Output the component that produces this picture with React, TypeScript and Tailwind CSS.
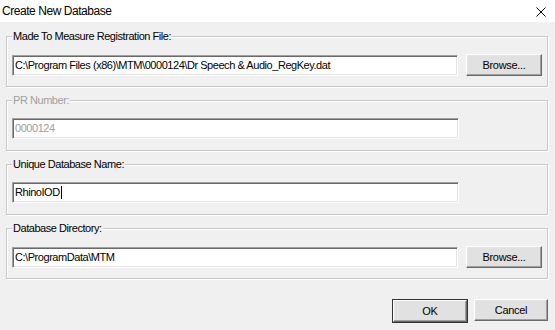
import React from "react";

const font = { fontFamily: '"Liberation Sans", Arial, sans-serif' };

function Group({ label, disabled, children }: { label: string; disabled?: boolean; children: React.ReactNode }) {
  return (
    <div className="relative h-[51px] border border-[#c9c9c9] shadow-[inset_1px_1px_0_#ffffff,1px_1px_0_#ffffff] pl-[5px] pr-[5px] pt-[17px]">
      <span
        className={`absolute left-[5px] top-[-8px] bg-[#f0f0f0] px-px text-[11px] leading-[14px] tracking-[-0.45px] ${disabled ? "text-[#a0a0a0]" : "text-black"}`}
      >
        {label}
      </span>
      {children}
    </div>
  );
}

function Field({ value, disabled, caret, width }: { value: string; disabled?: boolean; caret?: boolean; width: string }) {
  return (
    <div
      className={`${width} h-[21px] bg-white border border-t-[#a0a0a0] border-l-[#a0a0a0] border-b-white border-r-white shadow-[inset_1px_1px_0_#696969,inset_-1px_-1px_0_#e3e3e3] flex items-center pl-[2px] text-[11px] tracking-[-0.45px] whitespace-nowrap overflow-hidden ${disabled ? "text-[#a0a0a0]" : "text-black"}`}
    >
      <span>{value}</span>
      {caret && <span className="inline-block w-px h-[13px] bg-black ml-px" />}
    </div>
  );
}

function Btn({ children, w }: { children: React.ReactNode; w: string }) {
  return (
    <div
      className={`${w} h-[22px] bg-[#e1e1e1] border border-t-white border-l-white border-b-[#696969] border-r-[#696969] shadow-[inset_-1px_-1px_0_#a0a0a0,inset_1px_1px_0_#e3e3e3] flex items-center justify-center text-[11px] tracking-[-0.3px] text-black`}
    >
      {children}
    </div>
  );
}

export default function App() {
  return (
    <div className="w-[555px] h-[330px] bg-[#f0f0f0] flex flex-col overflow-hidden" style={font}>
      <div className="h-[22px] bg-white flex items-center justify-between pl-[2px] pr-[9px] shrink-0">
        <span className="text-[12px] tracking-[-0.45px] text-black leading-none">Create New Database</span>
        <svg width="10" height="10" viewBox="0 0 10 10" className="mt-[2px]">
          <path d="M0.5 0.5 L9.5 9.5 M9.5 0.5 L0.5 9.5" stroke="#000" strokeWidth="1" />
        </svg>
      </div>
      <div className="flex flex-col gap-[13px] pl-[6px] pr-[7px] pt-[14px]">
        <Group label="Made To Measure Registration File:">
          <div className="flex items-center gap-[8px]">
            <Field width="w-[446px]" value="C:\Program Files (x86)\MTM\0000124\Dr Speech & Audio_RegKey.dat" />
            <Btn w="w-[76px]">Browse...</Btn>
          </div>
        </Group>
        <Group label="PR Number:" disabled>
          <Field width="w-[447px]" disabled value="0000124" />
        </Group>
        <Group label="Unique Database Name:">
          <Field width="w-[447px]" value="RhinoIOD" caret />
        </Group>
        <Group label="Database Directory:">
          <div className="flex items-center gap-[8px]">
            <Field width="w-[446px]" value="C:\ProgramData\MTM" />
            <Btn w="w-[76px]">Browse...</Btn>
          </div>
        </Group>
      </div>
      <div className="flex justify-end gap-[6px] pr-[7px] mt-[20px]">
        <div className="border border-[#333333]">
          <Btn w="w-[74px]">OK</Btn>
        </div>
        <Btn w="w-[74px]">Cancel</Btn>
      </div>
    </div>
  );
}
